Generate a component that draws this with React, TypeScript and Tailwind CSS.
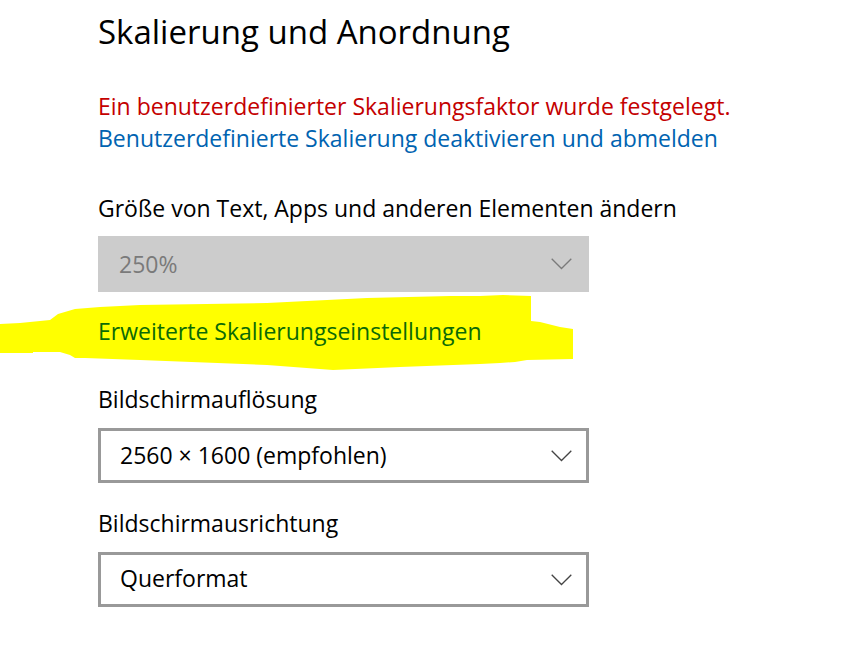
import React from 'react';

const Chevron: React.FC<{ color: string }> = ({ color }) => (
  <svg width="21" height="12" viewBox="0 0 21 12" fill="none">
    <path d="M0.7 0.7 L10.5 10.5 L20.3 0.7" stroke={color} strokeWidth="1.3" />
  </svg>
);

const Highlight: React.FC = () => (
  <svg
    className="absolute left-0 top-0 pointer-events-none"
    width="600"
    height="400"
    viewBox="0 0 600 400"
  >
    <polygon
      fill="#ffff00"
      points="0,324 20,323 50,320 58,314 75,309 100,307 140,305 267,303 367,298 450,296 480,296 503,295 531,296 531,321 540,322 560,327 573,329 573,359 527,360 515,362 500,363 480,364 400,367 333,370 267,365 140,360 85,358 75,358 70,355 60,352 33,352 33,353 0,353"
    />
  </svg>
);

const font = { fontFamily: '"Open Sans", "Noto Sans", sans-serif' };

export default function App() {
  return (
    <div className="relative min-h-screen w-full bg-white overflow-hidden" style={font}>
      <Highlight />
      <div className="relative flex flex-col pl-[98px] pt-[10px] text-[23px] leading-[32px] text-black">
        <h1 className="text-[33px] leading-[44px] font-normal">Skalierung und Anordnung</h1>

        <p className="mt-[36px] text-[#c40000]">Ein benutzerdefinierter Skalierungsfaktor wurde festgelegt.</p>
        <a className="text-[#0063b1]">Benutzerdefinierte Skalierung deaktivieren und abmelden</a>

        <label className="mt-[38px]">Größe von Text, Apps und anderen Elementen ändern</label>
        <div className="mt-[12px] flex h-[56px] w-[491px] items-center justify-between bg-[#cccccc] pl-[21px] pr-[17px] text-[#7a7a7a]">
          <span>250%</span>
          <Chevron color="#7a7a7a" />
        </div>

        <a className="mt-[23px] text-[#0b6a06]">Erweiterte Skalierungseinstellungen</a>

        <label className="mt-[36px]">Bildschirmauflösung</label>
        <div className="mt-[13px] flex h-[55px] w-[491px] items-center justify-between border-[3px] border-[#999999] pl-[19px] pr-[14px]">
          <span className="-mt-[1px]">2560 × 1600 (empfohlen)</span>
          <Chevron color="#444444" />
        </div>

        <label className="mt-[24px]">Bildschirmausrichtung</label>
        <div className="mt-[13px] flex h-[55px] w-[491px] items-center justify-between border-[3px] border-[#999999] pl-[19px] pr-[14px]">
          <span className="-mt-[3px]">Querformat</span>
          <Chevron color="#444444" />
        </div>
      </div>
    </div>
  );
}
